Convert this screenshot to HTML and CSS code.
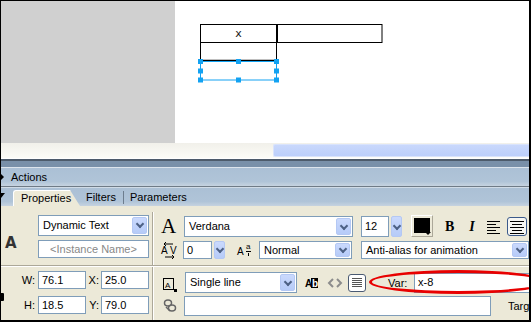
FILE: index.html
```html
<!DOCTYPE html>
<html lang="en">
<head>
  <meta charset="UTF-8">
  <meta name="viewport" content="width=device-width, initial-scale=1.0">
  <title>Properties - Dynamic Text</title>
  <link rel="stylesheet" href="styles.css">
</head>
<body>
  <div class="window">

    <!-- Stage -->
    <div class="stage">
      <div class="pasteboard"></div>
      <div class="canvas">
        <svg class="drawing" width="354" height="142" viewBox="0 0 354 142">
          <rect x="25.5" y="23.5" width="181.5" height="18" fill="none" stroke="#000"/>
          <rect x="25.5" y="41.5" width="76" height="18" fill="none" stroke="#000"/>
          <line x1="102" y1="23" x2="102" y2="42" stroke="#000" stroke-width="2"/>
          <line x1="25" y1="59.5" x2="102" y2="59.5" stroke="#000" stroke-width="1.5"/>
          <text x="63.5" y="36" text-anchor="middle" class="cell-text">x</text>
          <rect x="25.5" y="60.5" width="76" height="18.5" fill="none" stroke="#12a2f2"/>
          <g fill="#12a2f2">
            <rect x="23" y="58" width="5" height="5"/>
            <rect x="61" y="58" width="5" height="5"/>
            <rect x="99" y="58" width="5" height="5"/>
            <rect x="23" y="67.5" width="5" height="5"/>
            <rect x="99" y="67.5" width="5" height="5"/>
            <rect x="23" y="76.5" width="5" height="5"/>
            <rect x="61" y="76.5" width="5" height="5"/>
            <rect x="99" y="76.5" width="5" height="5"/>
          </g>
        </svg>
      </div>
    </div>

    <!-- Horizontal scrollbar -->
    <div class="hscroll"><div class="thumb"></div></div>
    <div class="divider"></div>

    <!-- Panel headers -->
    <div class="panel-bar actions"><i class="tri-right"></i>Actions</div>
    <div class="panel-bar tabs">
      <i class="tri-down"></i>
      <div class="tab active">Properties</div>
      <div class="tab">Filters</div>
      <span class="tab-sep"></span>
      <div class="tab">Parameters</div>
    </div>

    <!-- Property inspector -->
    <div class="props">
      <div class="props-top">
        <div class="col-left">
          <div class="big-a">A</div>
          <div class="stack">
            <div class="select w-type"><span>Dynamic Text</span><i class="drop"></i></div>
            <div class="field w-type placeholder">&lt;Instance Name&gt;</div>
          </div>
        </div>
        <div class="vsep top"></div>
        <div class="col-right">
          <div class="row row1">
            <span class="serif-a">A</span>
            <div class="select w-font"><span>Verdana</span><i class="drop"></i></div>
            <div class="field w-size tall">12</div>
            <i class="drop lone tall"></i>
            <div class="swatch"><i></i></div>
            <span class="fmt bold">B</span>
            <span class="fmt ital">I</span>
            <svg class="align-left" width="14" height="14" viewBox="0 0 14 14">
              <g stroke="#000" stroke-width="1">
                <line x1="0" y1="1.5" x2="13" y2="1.5"/>
                <line x1="0" y1="4.5" x2="9" y2="4.5"/>
                <line x1="0" y1="7.5" x2="13" y2="7.5"/>
                <line x1="0" y1="10.5" x2="9" y2="10.5"/>
                <line x1="0" y1="13.5" x2="13" y2="13.5"/>
              </g>
            </svg>
            <div class="align-center">
              <svg width="14" height="14" viewBox="0 0 14 14">
                <g stroke="#000" stroke-width="1">
                  <line x1="0" y1="1.5" x2="14" y2="1.5"/>
                  <line x1="2" y1="4.5" x2="12" y2="4.5"/>
                  <line x1="0" y1="7.5" x2="14" y2="7.5"/>
                  <line x1="2" y1="10.5" x2="12" y2="10.5"/>
                  <line x1="0" y1="13.5" x2="14" y2="13.5"/>
                </g>
              </svg>
            </div>
          </div>
          <div class="row row2">
            <svg class="kern" width="18" height="18" viewBox="0 0 18 18">
              <text x="1" y="13" class="icon-text">A</text>
              <text x="10" y="13" class="icon-text">V</text>
              <g stroke="#000" stroke-width="1" fill="none">
                <line x1="4" y1="3" x2="13" y2="3"/>
                <polyline points="6,1 4,3 6,5"/>
                <line x1="5" y1="16" x2="14" y2="16"/>
                <polyline points="12,14 14,16 12,18"/>
              </g>
            </svg>
            <div class="field w-kern">0</div>
            <i class="drop lone"></i>
            <svg class="baseline" width="16" height="14" viewBox="0 0 16 14">
              <text x="0" y="12" class="icon-text">A</text>
              <text x="9" y="6" class="tiny-text">a</text>
              <g stroke="#000" stroke-width="1">
                <line x1="9" y1="8.5" x2="14" y2="8.5"/>
                <line x1="11.5" y1="10" x2="11.5" y2="13"/>
              </g>
            </svg>
            <div class="select w-normal short"><span>Normal</span><i class="drop"></i></div>
            <div class="select w-alias short"><span>Anti-alias for animation</span><i class="drop"></i></div>
          </div>
        </div>
      </div>

      <div class="props-bottom">
        <i class="lock"></i>
        <div class="col-left">
          <div class="dims">
            <label>W:</label><div class="field w-num">76.1</div>
            <label class="x">X:</label><div class="field w-num">25.0</div>
          </div>
          <div class="dims">
            <label>H:</label><div class="field w-num">18.5</div>
            <label class="x">Y:</label><div class="field w-num">79.0</div>
          </div>
        </div>
        <div class="vsep"></div>
        <div class="col-right">
          <div class="row row3">
            <svg class="abox" width="14" height="14" viewBox="0 0 14 14">
              <rect x="0.5" y="0.5" width="10" height="11" fill="none" stroke="#000"/>
              <text x="2" y="10" class="tiny-text">A</text>
              <rect x="11" y="11" width="3" height="3" fill="#000"/>
            </svg>
            <div class="select w-line"><span>Single line</span><i class="drop"></i></div>
            <svg class="ab" width="13" height="10" viewBox="0 0 13 10">
              <text x="0" y="9" class="ab-text">A</text>
              <rect x="6" y="0" width="7" height="10" fill="#000"/>
              <text x="7" y="9" class="ab-text light">b</text>
            </svg>
            <svg class="html" width="14" height="10" viewBox="0 0 14 10">
              <g stroke="#8c8c8c" stroke-width="2" fill="none">
                <polyline points="5,1 1,5 5,9"/>
                <polyline points="9,1 13,5 9,9"/>
              </g>
            </svg>
            <div class="border-btn">
              <svg width="10" height="11" viewBox="0 0 10 11">
                <g stroke="#555" stroke-width="1">
                  <line x1="0" y1="1.5" x2="10" y2="1.5"/>
                  <line x1="0" y1="3.5" x2="10" y2="3.5"/>
                  <line x1="0" y1="5.5" x2="10" y2="5.5"/>
                  <line x1="0" y1="7.5" x2="10" y2="7.5"/>
                  <line x1="0" y1="9.5" x2="10" y2="9.5"/>
                </g>
              </svg>
            </div>
            <label class="var">Var:</label>
            <div class="field w-var">x-8</div>
          </div>
          <div class="row row4">
            <svg class="link" width="14" height="16" viewBox="0 0 14 16">
              <g stroke="#666" stroke-width="1.5" fill="none">
                <ellipse cx="5" cy="5" rx="3.5" ry="3"/>
                <ellipse cx="9" cy="10" rx="3.5" ry="3"/>
                <line x1="3" y1="9" x2="7" y2="13"/>
              </g>
            </svg>
            <div class="field w-url"></div>
            <span class="target">Targe</span>
          </div>
        </div>
        <div class="mark"></div>
      </div>
    </div>

  </div>
</body>
</html>
```

FILE: styles.css
```css
/* Reset */
* {
  margin: 0;
  padding: 0;
  box-sizing: border-box;
}

body {
  font-family: 'Liberation Sans', Arial, sans-serif;
  font-size: 11px;
  color: #000;
  background: #fff;
}

i {
  display: block;
  font-style: normal;
}

svg {
  overflow: visible;
  flex-shrink: 0;
}

/* Window frame */
.window {
  width: 531px;
  height: 322px;
  border: 1px solid #000;
  border-right-width: 2px;
  border-bottom-width: 2px;
  overflow: hidden;
  display: flex;
  flex-direction: column;
}

/* Stage */
.stage {
  height: 142px;
  display: flex;
  flex-shrink: 0;
}

.pasteboard {
  width: 174px;
  background: #d0d0d0;
}

.canvas {
  flex: 1;
  background: #fff;
  position: relative;
}

.drawing {
  position: absolute;
  left: 0;
  top: 0;
}

.cell-text {
  font-family: 'DejaVu Sans', sans-serif;
  font-size: 11px;
  fill: #222;
}

/* Scrollbar + dividers */
.hscroll {
  height: 16px;
  flex-shrink: 0;
  background: linear-gradient(#f1f0ea, #fcfcf7);
  border-bottom: 1px solid #fff;
  padding: 1px 0 0 272px;
}

.thumb {
  height: 13px;
  background: linear-gradient(#c9d8fc, #bccffb);
  border: 1px solid #d9e3fc;
  border-right: none;
  border-radius: 2px 0 0 2px;
}

.divider {
  height: 8px;
  flex-shrink: 0;
  background: #7990a9;
  border-top: 2px solid #4d5b6b;
}

/* Panel bars */
.panel-bar {
  flex-shrink: 0;
  display: flex;
  align-items: center;
  background: linear-gradient(#abc0d5 0%, #b0c4d8 75%, #c6d3e0 100%);
}

.actions {
  height: 20px;
  border-top: 1px solid #dce4ec;
  border-bottom: 1px solid #6f7b87;
  padding-left: 10px;
}

.tri-right {
  width: 0;
  height: 0;
  border-top: 4px solid transparent;
  border-bottom: 4px solid transparent;
  border-left: 4px solid #000;
  margin-left: -11px;
  margin-right: 7px;
}

.tabs {
  height: 19px;
  align-items: flex-end;
  border-top: 1px solid #d0dbe6;
}

.tri-down {
  width: 0;
  height: 0;
  border-left: 4px solid transparent;
  border-right: 4px solid transparent;
  border-top: 5px solid #000;
  margin: 0 8px 8px -4px;
  align-self: flex-end;
}

.tab {
  height: 16px;
  line-height: 15px;
  padding: 0 6px;
}

.tab.active {
  width: 67px;
  padding-left: 7px;
  background: #ece9d8;
  border-top: 1px solid #fff;
  border-left: 1px solid #fff;
  border-radius: 3px 0 0 0;
  clip-path: polygon(0 0, 57px 0, 67px 100%, 0 100%);
}

.tab-sep {
  width: 1px;
  height: 13px;
  margin: 0 0 2px 1px;
  background: #6d7d8e;
}

/* Property inspector */
.props {
  flex: 1;
  background: #ece9d8;
  display: flex;
  flex-direction: column;
  position: relative;
}

.props-top {
  height: 60px;
  display: flex;
  border-bottom: 1px solid #aca899;
}

.props-bottom {
  flex: 1;
  display: flex;
  border-top: 1px solid #fff;
  position: relative;
}

.col-left {
  width: 151px;
  flex-shrink: 0;
}

.props-top .col-left {
  display: flex;
  align-items: center;
}

.big-a {
  width: 37px;
  padding: 14px 0 0 4px;
  font-family: 'DejaVu Sans', sans-serif;
  font-weight: bold;
  font-size: 15px;
  color: #333;
}

.stack {
  display: flex;
  flex-direction: column;
  gap: 4px;
  padding-top: 1px;
}

.vsep {
  width: 2px;
  flex-shrink: 0;
  border-left: 1px solid #aca899;
  border-right: 1px solid #fff;
}

.vsep.top {
  margin-top: 6px;
}

.col-right {
  flex: 1;
  padding-left: 7px;
}

.row {
  display: flex;
  align-items: center;
}

.row1 {
  height: 21px;
  margin-top: 10px;
}

.row2 {
  height: 18px;
  margin-top: 4px;
}

.row3 {
  height: 21px;
  margin-top: 5px;
}

.row4 {
  height: 19px;
  margin-top: 3px;
}

/* Inputs */
.field,
.select {
  height: 18px;
  background: #fff;
  border: 1px solid #7f9db9;
  line-height: 16px;
  padding-left: 3px;
  white-space: nowrap;
  overflow: hidden;
  flex-shrink: 0;
}

.select {
  height: 21px;
  display: flex;
  align-items: center;
  justify-content: space-between;
  padding: 1px;
  line-height: 17px;
}

.select span {
  padding-left: 3px;
}

.select.short {
  height: 18px;
}

.field.tall {
  height: 21px;
  line-height: 19px;
}

.placeholder {
  color: #888;
  text-align: center;
  padding-left: 0;
}

.drop {
  width: 15px;
  height: 100%;
  flex-shrink: 0;
  background: linear-gradient(#cad9fd, #b6cbf8);
  border: 1px solid #b4c8f4;
  border-radius: 2px;
  position: relative;
}

.drop::after {
  content: '';
  position: absolute;
  left: 4px;
  top: 50%;
  width: 4px;
  height: 4px;
  margin-top: -4px;
  border-right: 2px solid #4d6185;
  border-bottom: 2px solid #4d6185;
  transform: rotate(45deg);
}

.drop.lone {
  width: 11px;
  height: 18px;
  margin-left: 2px;
}

.drop.lone::after {
  left: 2px;
}

.drop.tall {
  height: 21px;
}

.w-type { width: 111px; }
.w-font { width: 169px; margin-left: 7px; }
.w-size { width: 28px; margin-left: 8px; }
.w-kern { width: 29px; margin-left: 5px; }
.w-normal { width: 93px; margin-left: 6px; }
.w-alias { width: 168px; margin-left: 9px; }
.w-num { width: 48px; }
.w-line { width: 112px; margin-left: 8px; }
.w-var { width: 122px; height: 20px; }
.w-url { width: 307px; margin-left: 7px; height: 20px; }

/* Row 1 controls */
.serif-a {
  width: 16px;
  font-family: 'Liberation Serif', serif;
  font-size: 21px;
  line-height: 21px;
}

.swatch {
  width: 22px;
  height: 22px;
  margin: -1px 0 0 9px;
  border: 1px solid #fff;
  border-right-color: #aca899;
  border-bottom-color: #aca899;
  padding: 2px;
  position: relative;
}

.swatch i {
  width: 16px;
  height: 15px;
  background: #000;
}

.swatch::after {
  content: '';
  position: absolute;
  right: 1px;
  bottom: 1px;
  border-left: 3px solid transparent;
  border-right: 3px solid transparent;
  border-top: 3px solid #000;
}

.fmt {
  font-family: 'Liberation Serif', serif;
  font-weight: bold;
  font-size: 14px;
}

.bold { margin-left: 12px; }
.ital { margin-left: 15px; font-style: italic; }

.align-left {
  margin-left: 12px;
}

.align-center {
  width: 20px;
  height: 19px;
  margin-left: 6px;
  border: 1px solid #3b5a8b;
  border-radius: 3px;
  background: #f6f6f2;
  display: flex;
  align-items: center;
  justify-content: center;
}

/* Row 2 icons */
.icon-text {
  font-family: 'Liberation Sans', sans-serif;
  font-size: 10px;
}

.tiny-text {
  font-family: 'Liberation Sans', sans-serif;
  font-size: 8px;
}

.kern {
  margin-left: -1px;
}

.baseline {
  margin-left: 12px;
}

/* Bottom section */
.dims {
  display: flex;
  align-items: center;
  margin-top: 4px;
}

.dims + .dims {
  margin-top: 7px;
}

.dims label {
  width: 37px;
  padding-right: 3px;
  text-align: right;
}

.dims label.x {
  width: 15px;
  padding-right: 2px;
}

.abox {
  margin: 4px 0 0 2px;
}

.ab {
  margin-left: 8px;
}

.ab-text {
  font-family: 'Liberation Sans', sans-serif;
  font-weight: bold;
  font-size: 10px;
}

.ab-text.light {
  fill: #fff;
}

.html {
  margin-left: 10px;
}

.border-btn {
  width: 18px;
  height: 18px;
  margin-left: 6px;
  border: 1px solid #4a5a72;
  border-radius: 3px;
  background: #fff;
  display: flex;
  align-items: center;
  justify-content: center;
}

.var {
  margin-left: 22px;
  width: 26px;
}

.link {
  margin-left: 2px;
}

.target {
  margin-left: 17px;
}

/* Partial icon cut by the left edge */
.lock {
  position: absolute;
  left: 0;
  top: 26px;
  width: 3px;
  height: 8px;
  background: #000;
  border-radius: 0 1px 1px 0;
}

/* Red annotation ring */
.mark {
  position: absolute;
  left: 368px;
  top: 3px;
  width: 178px;
  height: 24px;
  border: 3px solid #e80000;
  border-radius: 50%;
}
```
